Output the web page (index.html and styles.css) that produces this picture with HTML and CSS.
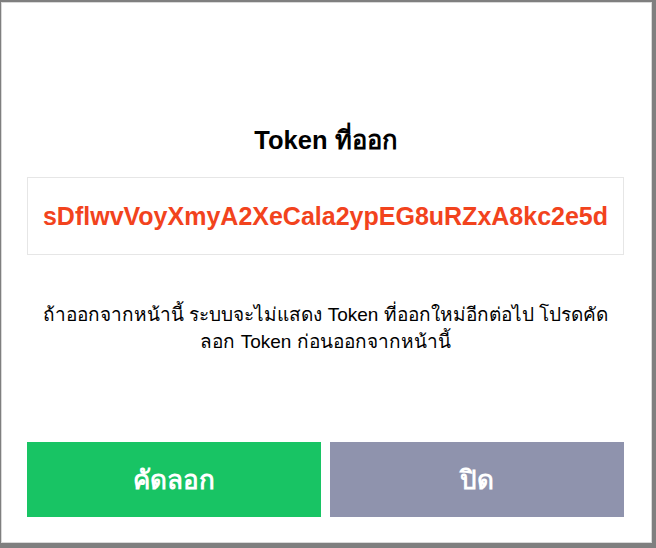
FILE: index.html
```html
<!DOCTYPE html>
<html lang="th">
<head>
<meta charset="utf-8">
<title>Token</title>
<link rel="stylesheet" href="styles.css">
</head>
<body>
<div class="modal">
  <h2 class="title">Token ที่ออก</h2>
  <div class="token-box"><span class="token">sDflwvVoyXmyA2XeCala2ypEG8uRZxA8kc2e5d</span></div>
  <p class="note">ถ้าออกจากหน้านี้ ระบบจะไม่แสดง Token ที่ออกใหม่อีกต่อไป โปรดคัด<br>ลอก Token ก่อนออกจากหน้านี้</p>
  <div class="actions">
    <button class="btn btn-copy">คัดลอก</button>
    <button class="btn btn-close">ปิด</button>
  </div>
</div>
</body>
</html>
```
FILE: styles.css
```css
html, body {
  margin: 0;
  padding: 0;
}
body {
  background: #7f7f7f;
  width: 656px;
  height: 548px;
  overflow: hidden;
  font-family: "Liberation Sans", Arial, sans-serif;
}
.modal {
  box-sizing: border-box;
  margin: 2px 0 0 1px;
  width: 651px;
  height: 541px;
  background: #fff;
  border: 1px solid #d9d9d9;
  padding: 0 27px 25px 25px;
  display: flex;
  flex-direction: column;
}
.title {
  margin: 122px 0 0;
  font-size: 25.5px;
  line-height: 30px;
  font-weight: bold;
  text-align: center;
  color: #000;
}
.token-box {
  margin-top: 22px;
  height: 78px;
  box-sizing: border-box;
  border: 1px solid #e6e6e6;
  display: flex;
  align-items: center;
  justify-content: center;
}
.token {
  color: #f2431d;
  font-weight: bold;
  font-size: 25px;
}
.note {
  margin: 46px 0 0;
  font-size: 19px;
  line-height: 27px;
  text-align: center;
  color: #000;
}
.actions {
  margin-top: auto;
  display: flex;
  gap: 9px;
}
.btn {
  flex: 1;
  height: 75px;
  border: 0;
  color: #fff;
  font-family: inherit;
  font-size: 26px;
  font-weight: bold;
  cursor: pointer;
}
.btn-copy { background: #18c464; }
.btn-close { background: #8f93ad; }
```
